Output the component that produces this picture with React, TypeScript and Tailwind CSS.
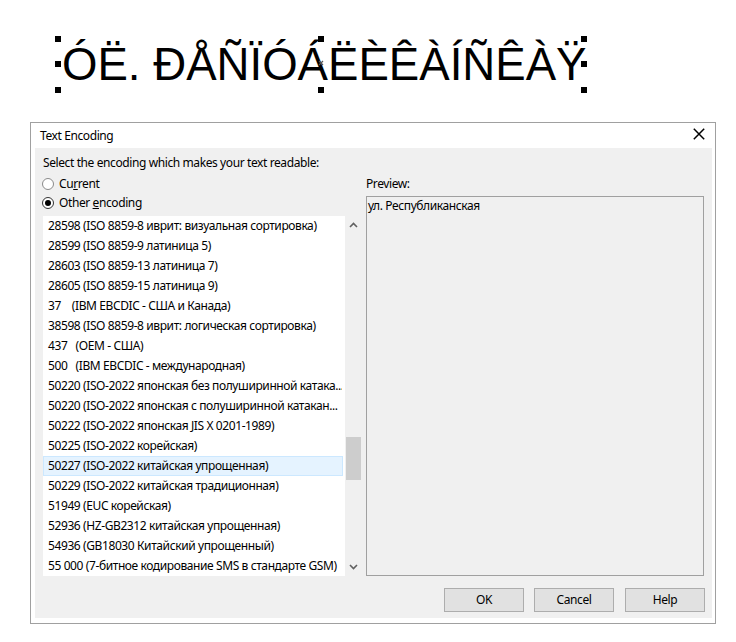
import React from "react";

const items: string[] = [
  "28598 (ISO 8859-8 иврит: визуальная сортировка)",
  "28599 (ISO 8859-9 латиница 5)",
  "28603 (ISO 8859-13 латиница 7)",
  "28605 (ISO 8859-15 латиница 9)",
  "37    (IBM EBCDIC - США и Канада)",
  "38598 (ISO 8859-8 иврит: логическая сортировка)",
  "437   (OEM - США)",
  "500   (IBM EBCDIC - международная)",
  "50220 (ISO-2022 японская без полуширинной катака...",
  "50220 (ISO-2022 японская с полуширинной катакан...",
  "50222 (ISO-2022 японская JIS X 0201-1989)",
  "50225 (ISO-2022 корейская)",
  "50227 (ISO-2022 китайская упрощенная)",
  "50229 (ISO-2022 китайская традиционная)",
  "51949 (EUC корейская)",
  "52936 (HZ-GB2312 китайская упрощенная)",
  "54936 (GB18030 Китайский упрощенный)",
  "55 000 (7-битное кодирование SMS в стандарте GSM)",
];

function Handle({ className }: { className: string }) {
  return <div className={"absolute w-[6px] h-[6px] bg-black " + className} />;
}

export default function App() {
  return (
    <div className="w-[736px] h-[642px] bg-white overflow-hidden font-['Noto_Sans',sans-serif] text-[12px] tracking-[-0.4px] text-black">
      <div className="h-[122px] pt-[39px] pl-[58px]">
        <div className="relative w-[526px] h-[51px]">
          <div className="pl-[4px] text-[45.6px] tracking-normal leading-[51px] font-['Liberation_Sans',Arial,sans-serif] whitespace-nowrap">
            ÓË. ĐÅÑÏÓÁËÈÊÀÍÑÊÀŸ
          </div>
          <Handle className="left-[-3px] top-[-3px]" />
          <Handle className="left-[260px] top-[-3px]" />
          <Handle className="right-[-3px] top-[-3px]" />
          <Handle className="left-[-3px] top-[22px]" />
          <Handle className="right-[-3px] top-[22px]" />
          <Handle className="left-[-3px] bottom-[-3px]" />
          <Handle className="left-[260px] bottom-[-3px]" />
          <Handle className="right-[-3px] bottom-[-3px]" />
          <svg className="absolute left-[260px] top-[21px]" width="6" height="6" viewBox="0 0 6 6">
            <path d="M1 1 L5 5 M5 1 L1 5" stroke="#555" strokeWidth="1.2" />
          </svg>
        </div>
      </div>

      <div className="ml-[30px] w-[686px] h-[502px] border border-[#a0a0a0] bg-white flex flex-col">
        <div className="h-[25px] flex items-center justify-between pl-[9px] pr-[10px]">
          <span className="leading-[16px]">Text Encoding</span>
          <svg width="12" height="12" viewBox="0 0 12 12" className="mt-[-3px]">
            <path d="M0.8 0.8 L11.2 11.2 M11.2 0.8 L0.8 11.2" stroke="#000" strokeWidth="1.5" />
          </svg>
        </div>
        <div className="ml-[4px] mr-[3px] h-[470px] bg-[#f0f0f0] pt-[7px] pl-[8px] pr-[7px] flex flex-col">
          <div className="h-[16px] leading-[16px]">Select the encoding which makes your text readable:</div>
          <div className="flex mt-[3px]">
            <div className="w-[318px] flex flex-col">
              <div className="h-[19px] flex items-center">
                <span className="w-[12px] h-[12px] rounded-full border border-[#8a8a8a] bg-white ml-[-1px]" />
                <span className="ml-[5px] leading-[16px]">
                  Cu<span className="underline">r</span>rent
                </span>
              </div>
              <div className="h-[19px] flex items-center">
                <span className="w-[12px] h-[12px] rounded-full border border-[#333] bg-white ml-[-1px] flex items-center justify-center">
                  <span className="w-[6px] h-[6px] rounded-full bg-black" />
                </span>
                <span className="ml-[5px] leading-[16px]">
                  Other <span className="underline">e</span>ncoding
                </span>
              </div>
              <div className="mt-[4px] h-[360px] bg-white flex">
                <div className="w-[302px] pr-[2px] flex flex-col">
                  {items.map((t, i) => (
                    <div
                      key={i}
                      className={
                        "h-[20px] flex items-center pl-[4px] whitespace-pre overflow-hidden border " +
                        (i === 12 ? "bg-[#e5f3ff] border-[#cce8ff]" : "border-transparent")
                      }
                    >
                      {t}
                    </div>
                  ))}
                </div>
                <div className="w-[16px] bg-[#f0f0f0] flex flex-col items-center">
                  <div className="h-[18px] flex items-center justify-center">
                    <svg width="9" height="6" viewBox="0 0 9 6">
                      <path d="M1 5 L4.5 1.5 L8 5" fill="none" stroke="#606060" strokeWidth="1.6" />
                    </svg>
                  </div>
                  <div className="mt-[203px] w-[15px] h-[43px] bg-[#cdcdcd]" />
                  <div className="mt-auto h-[18px] flex items-center justify-center">
                    <svg width="9" height="6" viewBox="0 0 9 6">
                      <path d="M1 1 L4.5 4.5 L8 1" fill="none" stroke="#606060" strokeWidth="1.6" />
                    </svg>
                  </div>
                </div>
              </div>
            </div>
            <div className="ml-[5px] w-[338px] flex flex-col">
              <div className="h-[19px] flex items-center leading-[16px]">Preview:</div>
              <div className="mt-[3px] h-[380px] border border-[#a0a0a0] pl-[1px] pt-[1px] leading-[16px]">
                ул. Республиканская
              </div>
            </div>
          </div>
          <div className="flex justify-end mt-[12px]">
            <button className="w-[80px] h-[24px] bg-[#e1e1e1] border border-[#adadad] leading-[16px]">OK</button>
            <button className="ml-[10px] w-[80px] h-[24px] bg-[#e1e1e1] border border-[#adadad] leading-[16px]">Cancel</button>
            <button className="ml-[11px] w-[80px] h-[24px] bg-[#e1e1e1] border border-[#adadad] leading-[16px]">Help</button>
          </div>
        </div>
      </div>
    </div>
  );
}
